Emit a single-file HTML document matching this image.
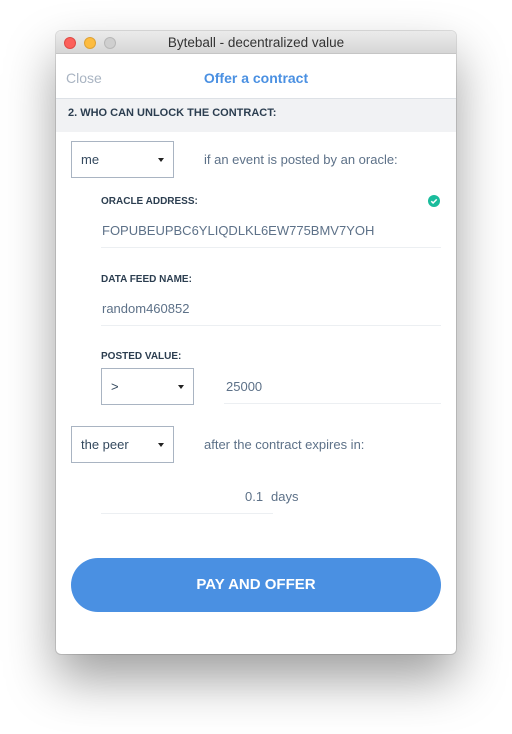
<!DOCTYPE html>
<html><head><style>
*{margin:0;padding:0;box-sizing:border-box}
body{width:512px;height:734px;background:#fff;position:relative;font-family:"Liberation Sans",sans-serif;overflow:hidden}
.win{position:absolute;left:56px;top:31px;width:400px;height:623px;background:#fff;border-radius:5px;box-shadow:0 25px 50px rgba(0,0,0,.38),0 0 0 1px rgba(0,0,0,.12);overflow:hidden}
.tb{position:absolute;left:0;top:0;width:400px;height:23px;background:linear-gradient(#ebebeb,#d6d6d6);border-bottom:1px solid #c5c5c5;text-align:center;font-size:13.5px;line-height:23px;color:#333}
.dot{position:absolute;top:6px;width:12px;height:12px;border-radius:50%}
.a{position:absolute;white-space:nowrap}
.sel{position:absolute;border:1px solid #a9b4c2;height:37px;font-size:13px;color:#34495e;padding-left:9px;line-height:35px}
.sel:after{content:"";position:absolute;right:9px;top:16px;border-left:3px solid transparent;border-right:3px solid transparent;border-top:4px solid #222}
.lbl{font-size:10px;font-weight:bold;color:#2c3e50}
.val{font-size:13px;color:#5d7188}
.ln{position:absolute;height:1px;background:#eceff2}
</style></head><body>
<div class="win">
<div class="tb">Byteball - decentralized value
<div class="dot" style="left:8px;background:#fc605b;border:1px solid #de4a45"></div>
<div class="dot" style="left:28px;background:#fdbc40;border:1px solid #dea236"></div>
<div class="dot" style="left:48px;background:#cfcfcf;border:1px solid #b8b8b8"></div>
</div>
<div class="a" style="left:10px;top:39px;font-size:14px;color:#a9b4c2">Close</div>
<div class="a" style="left:0;width:400px;text-align:center;top:39px;font-size:14px;font-weight:bold;color:#4a90e2">Offer a contract</div>
<div style="position:absolute;left:0;top:67px;width:400px;height:34px;background:#f1f2f4;border-top:1px solid #dde1e6"></div>
<div class="a lbl" style="left:12px;top:76px;font-size:11px">2. WHO CAN UNLOCK THE CONTRACT:</div>
<div class="sel" style="left:15px;top:110px;width:103px">me</div>
<div class="a val" style="left:148px;top:121px">if an event is posted by an oracle:</div>
<div class="a lbl" style="left:45px;top:165px">ORACLE ADDRESS:</div>
<svg class="a" style="left:372px;top:164px" width="12" height="12" viewBox="0 0 12 12"><circle cx="6" cy="6" r="6" fill="#1abc9c"/><path d="M3.3 6.2l1.8 1.8 3.6-3.6" stroke="#fff" stroke-width="1.5" fill="none"/></svg>
<div class="a val" style="left:46px;top:192px">FOPUBEUPBC6YLIQDLKL6EW775BMV7YOH</div>
<div class="ln" style="left:45px;top:216px;width:340px"></div>
<div class="a lbl" style="left:45px;top:243px">DATA FEED NAME:</div>
<div class="a val" style="left:46px;top:270px">random460852</div>
<div class="ln" style="left:45px;top:294px;width:340px"></div>
<div class="a lbl" style="left:45px;top:320px">POSTED VALUE:</div>
<div class="sel" style="left:45px;top:337px;width:93px">&gt;</div>
<div class="a val" style="left:170px;top:348px">25000</div>
<div class="ln" style="left:168px;top:372px;width:217px"></div>
<div class="sel" style="left:15px;top:395px;width:103px">the peer</div>
<div class="a val" style="left:148px;top:406px">after the contract expires in:</div>
<div class="a val" style="left:189px;top:458px">0.1</div>
<div class="a val" style="left:215px;top:458px">days</div>
<div class="ln" style="left:45px;top:482px;width:172px"></div>
<div style="position:absolute;left:15px;top:527px;width:370px;height:54px;border-radius:27px;background:#4a90e2;color:#fff;font-size:15px;font-weight:bold;text-align:center;line-height:54px">PAY AND OFFER</div>
</div>
</body></html>
